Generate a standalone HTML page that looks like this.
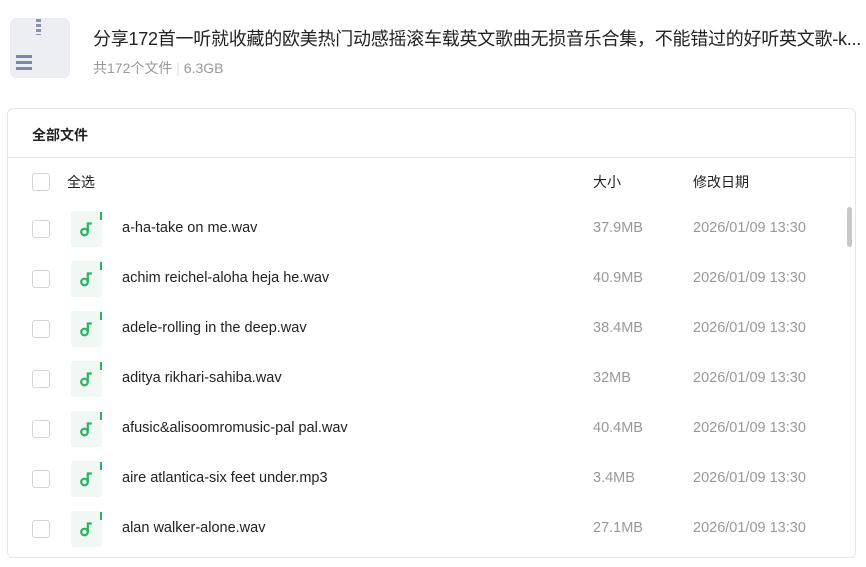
<!DOCTYPE html><html><head><meta charset="utf-8"><style>
body{margin:0;width:866px;height:567px;background:#fff;font-family:"Liberation Sans","Noto Sans CJK SC",sans-serif;position:relative;overflow:hidden}
.a{position:absolute}
.cb{position:absolute;left:32px;width:18px;height:18px;border:1px solid #d5d5d5;border-radius:3px;box-sizing:border-box}
.ic{position:absolute;left:71px;width:31px;height:36px;background:#f1f8f3;border-radius:3px}
.ic:after{content:"";position:absolute;right:0;top:1px;width:2px;height:8px;background:#28b463}
.nm{position:absolute;left:122px;font-size:14.5px;color:#222}
.sz{position:absolute;left:593px;font-size:14.5px;color:#999}
.dt{position:absolute;left:693px;font-size:14.5px;color:#999}
</style></head><body>
<div class="a" style="left:10px;top:18px;width:60px;height:60px;background:#eceef4;border-radius:6px"></div>
<div class="a" style="left:36px;top:19px;width:5px;height:16px;background:repeating-linear-gradient(#8a90aa 0 3px,transparent 3px 5px)"></div>
<div class="a" style="left:16px;top:55px;width:16px;height:15px;background:repeating-linear-gradient(#7e87a8 0 3px,transparent 3px 6px)"></div>
<div class="a" style="left:93px;top:25px;font-size:18px;color:#222;white-space:nowrap;letter-spacing:-0.25px">分享172首一听就收藏的欧美热门动感摇滚车载英文歌曲无损音乐合集，不能错过的好听英文歌-k...</div>
<div class="a" style="left:93px;top:58px;font-size:14px;color:#999">共172个文件 <span style="color:#ddd">|</span> 6.3GB</div>
<div class="a" style="left:7px;top:108px;width:849px;height:450px;border:1px solid #e6e6e6;border-radius:6px;box-sizing:border-box"></div>
<div class="a" style="left:32px;top:125px;font-size:14px;font-weight:bold;color:#222">全部文件</div>
<div class="a" style="left:8px;top:157px;width:847px;height:1px;background:#e6e6e6"></div>
<div class="cb" style="top:173px"></div>
<div class="a" style="left:67px;top:172px;font-size:14px;color:#222">全选</div>
<div class="a" style="left:593px;top:172px;font-size:14px;color:#222">大小</div>
<div class="a" style="left:693px;top:172px;font-size:14px;color:#222">修改日期</div>
<div class="a" style="left:847px;top:207px;width:5px;height:40px;background:#c8c8c8;border-radius:3px"></div>
<div id="rows"></div>
<script>
var d=[["a-ha-take on me.wav","37.9MB"],["achim reichel-aloha heja he.wav","40.9MB"],["adele-rolling in the deep.wav","38.4MB"],["aditya rikhari-sahiba.wav","32MB"],["afusic&alisoomromusic-pal pal.wav","40.4MB"],["aire atlantica-six feet under.mp3","3.4MB"],["alan walker-alone.wav","27.1MB"]];
var h="";d.forEach(function(r,i){var y=229+i*50;
h+='<div class="cb" style="top:'+(y-9)+'px"></div><div class="ic" style="top:'+(y-18)+'px"><svg width="31" height="36" viewBox="0 0 31 36"><circle cx="13.5" cy="21" r="3.3" fill="none" stroke="#28b463" stroke-width="2.2"/><path d="M16.8 21V12.5h4" fill="none" stroke="#28b463" stroke-width="2.2"/></svg></div><div class="nm" style="top:'+(y-9)+'px">'+r[0].replace("&","&amp;")+'</div><div class="sz" style="top:'+(y-9)+'px">'+r[1]+'</div><div class="dt" style="top:'+(y-9)+'px">2026/01/09 13:30</div>';});
document.getElementById("rows").innerHTML=h;
</script>
</body></html>
